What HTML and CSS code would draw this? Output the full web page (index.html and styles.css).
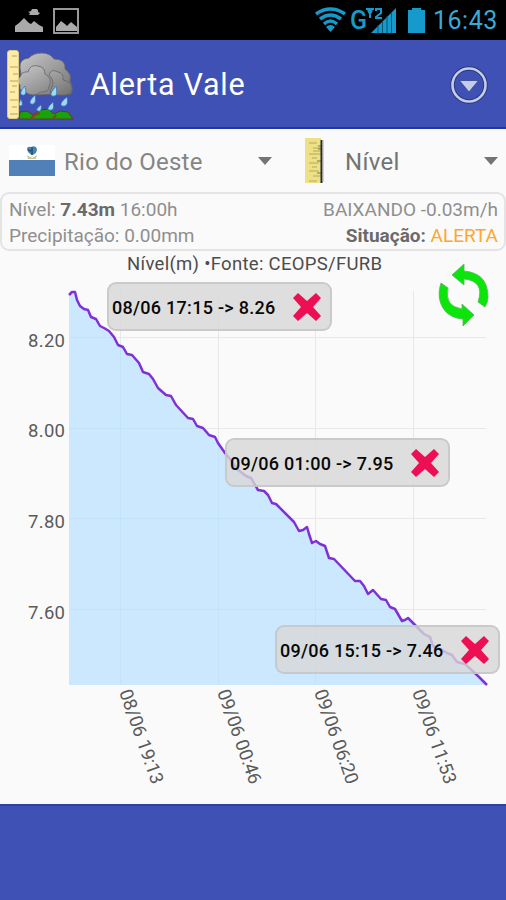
FILE: index.html
```html
<!DOCTYPE html>
<html lang="pt-BR">
<head>
<meta charset="utf-8">
<title>Alerta Vale</title>
<link rel="stylesheet" href="styles.css">
</head>
<body>
<div class="screen">
  <div class="status">
    <svg class="notif" width="28" height="23" viewBox="0 0 28 23" fill="#aaa"><path d="M0 23v-6l4-3 5-5 5 5 2 1 3-3 5 4 4 2v5z"/><path d="M14 6l1-2-2-1 3-1 1-2 3-1 3 2v2l2 1-2 2h-9z"/></svg>
    <svg class="notif photo" width="26" height="26" viewBox="0 0 26 26"><path d="M1 1h24v24H1z" fill="none" stroke="#999" stroke-width="2"/><path d="M3 23v-4l5-6 4 3 2 2 4-4 6 5v4z" fill="#aaa"/></svg>
    <div class="signals">
      <svg width="33" height="25" viewBox="0 0 33 25" fill="none" stroke="#159acb" stroke-width="3.5"><path d="M2 7q14.500-10 29 0M6 12q10.500-8 21 0M10 17q6.500-6 13 0"/><path d="M12 20q4.500-4 9 0l-4.500 5z" fill="#159acb" stroke="none"/></svg>
      <span class="net">G</span>
      <svg class="bars" width="31" height="26" viewBox="0 0 31 26"><path d="M5 26 30 1v25z" fill="#159acb"/><path d="M12 18v8M16.500 14v12M21 9v17M25.500 5v21" stroke="#075470" stroke-width="1"/><path d="M0 2h8M4 2v9M2 3l2 4 2-4M10 4V2h5v4l-5 4v1h6" fill="none" stroke="#159acb" stroke-width="2"/></svg>
      <svg class="battery" width="17" height="25" viewBox="0 0 17 25"><path d="M4 2V0h9v2h4v23H0V2z" fill="#159acb"/></svg>
      <span class="clock">16:43</span>
    </div>
  </div>

  <header class="appbar">
    <svg class="logo" width="68" height="72" viewBox="0 0 68 72">
      <defs><linearGradient id="cloud" x1="0" y1="0" x2="1" y2="1"><stop offset="0" stop-color="#c8c8c8"/><stop offset=".55" stop-color="#999"/><stop offset="1" stop-color="#707070"/></linearGradient></defs>
      <path d="M12 69l1-7 7-1 6 4 7-5 8-1 6 5 6-3 8 1 5 7z" fill="#16a30b" stroke="#663a16"/>
      <path d="M24 69q2-4 9-6M46 69l3-4" stroke="#87411c" stroke-width="2" fill="none"/>
      <g fill="url(#cloud)" stroke="#666" stroke-width=".8"><path d="M13 18q-1-9 9-10 4-5 13-5 8 0 12 6 12 0 11 10 7 5 5 12 4 8 1 13-8 2-17 0l-18 1-12-4z"/><path d="M13 27q2-6 8-5 2-8 10-6 7 1 7 8 8 4 4 13-1 6-8 5-8 6-16 0-6 0-5-7-5-4 0-8zM42 25q2-7 9-3 6 1 5 8 9 2 9 9-1 6-8 6H46q-5-3-1-8 3-6-3-12z"/></g>
      <g fill="#a5d7f5" stroke="#247ac0" stroke-width=".8"><path d="M18 36c-3 3-6 8-3 9 5 1 4-4 3-9zM28 45c-3 3-7 7-4 9 5 1 5-4 4-9zM49 36c-3 4-7 8-4 10 6 1 5-4 4-10zM46 52c-3 3-7 7-4 8 5 1 5-3 4-8zM60 47c-4 3-8 7-5 9 6 1 6-4 5-9zM34 55c-3 2-6 5-3 6 3 1 4-3 3-6zM14 49c-2 4-3 6-1 7 4 0 2-4 1-7z"/></g>
      <rect x=".5" y=".5" width="11" height="68" rx="2.500" fill="#ffeda6" stroke="#dccb88"/><path d="M5 6h5M3 17h8M6 24h5M3 31h8M5 36h5M3 42h5M3 50h8M5 57h5M3 64h8" stroke="#9c9066" stroke-width=".8"/>
    </svg>
    <h1>Alerta Vale</h1>
    <svg class="menu" width="38" height="38" viewBox="0 0 38 38"><circle cx="19" cy="19" r="16.500" fill="none" stroke="#29387f" stroke-width="4.500"/><circle cx="19" cy="19" r="16.500" fill="none" stroke="#c5cbea" stroke-width="2.600"/><path d="M9.500 14.500h19L19 26z" fill="#c5cbea" stroke="#34448f" stroke-width=".8"/></svg>
  </header>

  <main>
    <div class="selectors">
      <div class="select city">
        <svg width="46" height="31" viewBox="0 0 46 31"><path d="M0 0h46v16H0z" fill="#fff"/><path d="M0 15h46v16H0z" fill="#5080b7"/><path d="M18 3q2-2 4-1 5-2 6 2 0 5-5 6-5-2-5-7z" fill="#4b83ae"/><path d="M23 2v8M19 5l3 1" stroke="#244d75" stroke-width="1.500"/><path d="M18 10l3 2h4l3-2-1 4h-8z" fill="#cbc99c"/><circle cx="23" cy="11.500" r="1.500" fill="#f4f2d5"/></svg>
        <span>Rio do Oeste</span>
        <svg class="caret" width="14" height="8" viewBox="0 0 14 8"><path d="M0 0h14L7 8z" fill="#747474"/></svg>
      </div>
      <div class="select metric">
        <svg width="20" height="46" viewBox="0 0 20 46"><path d="M0 0h16v45H0z" fill="#eee085"/><path d="M4 5h8M8 10h8M8 13h8M4 16h12M7 20h5M4 25h10M7 29h5M4 33h10M8 38h8M4 43h8" stroke="#c6ba70" stroke-width="1.500"/><path d="M13 8h3M13 11h3M12 23h4M12 35h4" stroke="#777252"/><path d="M15.500 2h2v43h-2z" fill="#292929"/><path d="M17.500 2h1v42h-1z" fill="#aaa"/></svg>
        <span>Nível</span>
        <svg class="caret" width="14" height="8" viewBox="0 0 14 8"><path d="M0 0h14L7 8z" fill="#747474"/></svg>
      </div>
    </div>

    <section class="summary">
      <div class="row"><span>Nível: <b>7.43m</b> 16:00h</span><span>BAIXANDO -0.03m/h</span></div>
      <div class="row"><span>Precipitação: 0.00mm</span><span><b>Situação:</b> <em>ALERTA</em></span></div>
    </section>

    <section class="chart">
      <svg class="plot" width="506" height="553" viewBox="0 251 506 553">
        <path d="M69 337.500H486M69 428.500H486M69 518.500H486M69 609.500H486M120.500 291V685M218.500 291V685M315.500 291V685M413.500 291V685" stroke="#e8e8e8" fill="none"/>
        <path class="area" d="M69 295L72 292 75 292 77 300 80 306 84 309 88 310 91 317 96 319 100 326 104 328 109 331 114 337 118 345 123 347 127 354 132 355 139 363 143 372 149 374 153 379 158 388 166 395 171 396 176 405 188 418 193 419 197 426 203 428 209 435 215 437 218 443 225 453 230 459 237 469 246 476 251 478 258 490 264 491 268 495 272 503 276 504 294 522 299 531 303 530 307 527 309 534 312 543 316 541 320 544 325 546 329 558 334 559 355 581 360 581 364 586 368 594 373 590 381 599 386 600 390 607 395 609 402 621 405 620 408 618 414 624 424 634 430 637 433 646 442 650 447 653 452 655 457 662 465 664 477 675 487 685H69Z"/>
        <path d="M120.500 347V685M218.500 443V685M315.500 541V685M69 337.500H114M69 428.500H202M69 518.500H289M69 609.500H394" stroke="#bfe0f4" stroke-width=".7" fill="none"/>
        <path class="line" d="M69 295L72 292 75 292 77 300 80 306 84 309 88 310 91 317 96 319 100 326 104 328 109 331 114 337 118 345 123 347 127 354 132 355 139 363 143 372 149 374 153 379 158 388 166 395 171 396 176 405 188 418 193 419 197 426 203 428 209 435 215 437 218 443 225 453 230 459 237 469 246 476 251 478 258 490 264 491 268 495 272 503 276 504 294 522 299 531 303 530 307 527 309 534 312 543 316 541 320 544 325 546 329 558 334 559 355 581 360 581 364 586 368 594 373 590 381 599 386 600 390 607 395 609 402 621 405 620 408 618 414 624 424 634 430 637 433 646 442 650 447 653 452 655 457 662 465 664 477 675 487 685"/>
        <text class="title" x="127" y="270" textLength="255">Nível(m) •Fonte: CEOPS/FURB</text>
        <g class="axis">
          <text x="28" y="346.500" textLength="37">8.20</text><text x="28" y="437" textLength="37">8.00</text><text x="28" y="527.500" textLength="37">7.80</text><text x="28" y="618.500" textLength="37">7.60</text>
          <text transform="translate(119 692) rotate(70.5)" textLength="99">08/06 19:13</text>
          <text transform="translate(217 692) rotate(70.5)" textLength="99">09/06 00:46</text>
          <text transform="translate(314 692) rotate(70.5)" textLength="99">09/06 06:20</text>
          <text transform="translate(412 692) rotate(70.5)" textLength="99">09/06 11:53</text>
        </g>
      </svg>
      <svg class="refresh" width="52" height="64" viewBox="0 0 52 64" fill="#0be50b" stroke="#58b858" stroke-width=".8"><path d="M14 12L26 1v7Q50 10 50 34q0 5-3 10l-7-5Q47 18 26 16v6z"/><path d="M3 20l7 5Q6 43 24 46v-5l12 11-11 11v-7C6 55-3 38 3 20z"/></svg>
      <div class="marker m1"><span>08/06 17:15 -&gt; 8.26</span><svg width="30" height="30" viewBox="0 0 30 30"><path d="M6 1l9 8 9-8 5 5-8 9 8 9-5 5-9-8-9 8-5-5 8-9-8-9z"/></svg></div>
      <div class="marker m2"><span>09/06 01:00 -&gt; 7.95</span><svg width="30" height="30" viewBox="0 0 30 30"><path d="M6 1l9 8 9-8 5 5-8 9 8 9-5 5-9-8-9 8-5-5 8-9-8-9z"/></svg></div>
      <div class="marker m3"><span>09/06 15:15 -&gt; 7.46</span><svg width="30" height="30" viewBox="0 0 30 30"><path d="M6 1l9 8 9-8 5 5-8 9 8 9-5 5-9-8-9 8-5-5 8-9-8-9z"/></svg></div>
    </section>
  </main>
  <footer></footer>
</div>
</body>
</html>
```
FILE: styles.css
```css
* { box-sizing: border-box; }
body { margin: 0; background: #fafafa; font-family: Roboto, "Liberation Sans", sans-serif; }
.screen { width: 506px; height: 900px; display: flex; flex-direction: column; overflow: hidden; }
svg { display: block; flex: none; }
span, h1 { white-space: nowrap; }
.status { height: 40px; flex: none; background: #000; display: flex; align-items: flex-start; padding: 7px 7px 0 15px; }
.status .notif { margin-top: 2px; }
.status .photo { margin: 1px 0 0 10px; }
.signals { margin-left: auto; display: flex; color: #159acb; }
.net { font-size: 25px; font-weight: 500; line-height: 27px; margin-left: 3px; width: 17px; }
.bars { margin-left: -1px; }
.battery { margin: 1px 0 0 11px; }
.clock { font-size: 25px; line-height: 28px; margin-left: 8px; width: 66px; letter-spacing: .5px; color: #36abd9; }
.appbar { height: 89px; flex: none; background: #3f51b5; display: flex; align-items: center; padding: 0 18px 0 7px; border-bottom: 2px solid #1d37a8; }
.logo { margin-top: 4px; }
h1 { margin: 3px 0 0 15px; color: #fff; font-size: 30.5px; line-height: 36px; font-weight: 400; letter-spacing: .7px; }
.menu { margin: 3px 0 0 auto; }
main { height: 675px; flex: none; }
.selectors { display: flex; height: 63px; padding: 0 8px 0 9px; }
.select { display: flex; align-items: center; color: #858585; font-size: 24px; }
.select span { margin-top: 2px; }
.city { width: 296px; padding-right: 33px; }
.city span { margin-left: 9px; letter-spacing: .25px; }
.metric { width: 193px; }
.metric span { margin-left: 20px; color: #737373; letter-spacing: .3px; }
.metric svg:first-child { margin-top: 1px; }
.caret { margin-left: auto; }
.summary { height: 59px; border: 2px solid #e4e4e4; border-radius: 9px; padding: 3px 6px 0 7px; color: #8f8f8f; font-size: 19px; }
.row { display: flex; justify-content: space-between; height: 26px; line-height: 26px; }
.summary b { color: #6a6a6a; font-weight: 700; }
.summary em { color: #ffa62d; font-style: normal; }
.chart { position: relative; height: 553px; }
.area { fill: #cce8ff; }
.line { fill: none; stroke: #8130d5; stroke-width: 2.5; stroke-linejoin: round; }
.title { fill: #4c4c4c; font-size: 18.5px; }
.axis { fill: #5a5a5a; font-size: 18.5px; }
.refresh { position: absolute; left: 438px; top: 12px; }
.marker { position: absolute; width: 225px; height: 49px; display: flex; align-items: center; justify-content: space-between; padding: 0 8px 0 3px; border: 2px solid rgba(190,190,190,.65); border-radius: 9px; background: rgba(215,215,215,.8); color: #080808; font-size: 18px; font-weight: 500; letter-spacing: .28px; }
.marker span { margin-top: 2px; }
.marker svg { fill: #ed0f54; }
.m1 { left: 107px; top: 31px; }
.m2 { left: 225px; top: 187px; }
.m3 { left: 275px; top: 374px; }
footer { flex: 1; background: #3f51b5; border-top: 2px solid #2f42a4; }
```
